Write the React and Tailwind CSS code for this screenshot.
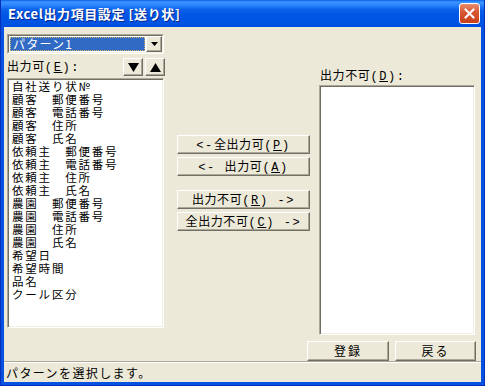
import React from "react";

const jp = { fontFamily: '"Noto Sans CJK JP", "Noto Sans", sans-serif' };

function Half({ children }) {
  return (
    <span className="font-['Liberation_Mono',monospace] tracking-[1.6px]">{children}</span>
  );
}

function Acc({ label, k, before, after }) {
  return (
    <span className="tracking-[0.6px]">
      {before && <Half>{before}</Half>}
      {label}
      <Half>
        (<u>{k}</u>){after}
      </Half>
    </span>
  );
}

function ClassicButton({ className = "", children }) {
  return (
    <div
      className={
        "flex items-center justify-center bg-[#ece9d8] border border-t-white border-l-white border-r-[#716f64] border-b-[#716f64] shadow-[inset_-1px_-1px_#aca899] text-[12px] leading-none text-black " +
        className
      }
    >
      {children}
    </div>
  );
}

function Sunken({ className = "", children }) {
  return (
    <div
      className={
        "bg-white border border-t-[#aca899] border-l-[#aca899] border-r-white border-b-white shadow-[inset_1px_1px_#716f64,inset_-1px_-1px_#f1efe2] " +
        className
      }
    >
      {children}
    </div>
  );
}

const items = [
  "自社送り状№",
  "顧客　郵便番号",
  "顧客　電話番号",
  "顧客　住所",
  "顧客　氏名",
  "依頼主　郵便番号",
  "依頼主　電話番号",
  "依頼主　住所",
  "依頼主　氏名",
  "農園　郵便番号",
  "農園　電話番号",
  "農園　住所",
  "農園　氏名",
  "希望日",
  "希望時間",
  "品名",
  "クール区分",
];

export default function App() {
  return (
    <div
      style={jp}
      className="w-[485px] h-[386px] flex flex-col bg-[#0552e2] border-x border-b border-[#0a2fb8] text-black select-none"
    >
      {/* title bar */}
      <div className="h-[29px] flex items-center pl-[7px] pr-[4px] bg-[linear-gradient(to_bottom,#0a5fe8_0px,#3d95ff_2px,#2a86fb_5px,#0a5ee9_10px,#0055e5_16px,#0053e2_24px,#0049d8_29px)]">
        <span className="flex-1 text-white font-bold text-[13px] tracking-[0.6px] [text-shadow:1px_1px_0_#0a2a8a] pt-[1px]">
          Excel出力項目設定 [送り状]
        </span>
        <div className="w-[21px] h-[21px] rounded-[3px] border border-white bg-[linear-gradient(to_bottom,#e98e6f,#d8532f_45%,#c7401b)] flex items-center justify-center">
          <svg width="11" height="11" viewBox="0 0 11 11">
            <path d="M1.5 1.5 L9.5 9.5 M9.5 1.5 L1.5 9.5" stroke="white" strokeWidth="2" strokeLinecap="square" />
          </svg>
        </div>
      </div>

      {/* client */}
      <div className="flex-1 mx-[3px] mb-[3px] bg-[#ece9d8] flex flex-col">
        <div className="flex items-start pl-[3px] pt-[7px]">
          {/* left column */}
          <div className="w-[157px] flex flex-col">
            <div className="h-[20px] flex border border-t-[#aca899] border-l-[#aca899] border-r-white border-b-white">
              <div className="flex-1 flex border border-t-[#716f64] border-l-[#716f64] border-r-[#f1efe2] border-b-[#f1efe2] bg-white">
                <div className="flex-1 m-[1px] bg-[#316ac5] outline-1 outline-dotted outline-[#c9b86a] -outline-offset-1 text-white text-[12px] leading-[14px] pl-[3px] tracking-[1.2px]">
                  パターン1
                </div>
                <ClassicButton className="w-[16px]">
                  <svg width="7" height="4" viewBox="0 0 7 4">
                    <path d="M0 0 H7 L3.5 4 Z" fill="black" />
                  </svg>
                </ClassicButton>
              </div>
            </div>

            <div className="mt-[4px] h-[18px] flex items-center">
              <div className="flex-1 text-[12px] leading-[14px]">
                <Acc label="出力可" k="E" after=":" />
              </div>
              <ClassicButton className="w-[20px] h-[18px]">
                <svg width="11" height="9" viewBox="0 0 11 9">
                  <path d="M0 0 H11 L5.5 9 Z" fill="black" />
                </svg>
              </ClassicButton>
              <ClassicButton className="w-[20px] h-[18px] ml-[2px] mr-[-1px]">
                <svg width="11" height="9" viewBox="0 0 11 9">
                  <path d="M0 9 H11 L5.5 0 Z" fill="black" />
                </svg>
              </ClassicButton>
            </div>

            <Sunken className="mt-[2px] h-[250px] pl-[4px] pt-[1px]">
              {items.map((t) => (
                <div key={t} className="h-[13px] text-[11.5px] leading-[13px] tracking-[1.8px] whitespace-pre">
                  {t}
                </div>
              ))}
            </Sunken>
          </div>

          {/* middle buttons */}
          <div className="ml-[13px] mt-[101px] w-[133px] flex flex-col gap-[3px]">
            <ClassicButton className="h-[19px]">
              <Acc before="<-" label="全出力可" k="P" />
            </ClassicButton>
            <ClassicButton className="h-[19px]">
              <Acc before="<- " label="出力可" k="A" />
            </ClassicButton>
            <ClassicButton className="h-[19px] mt-[11px]">
              <Acc label="出力不可" k="R" after=" ->" />
            </ClassicButton>
            <ClassicButton className="h-[19px]">
              <Acc label="全出力不可" k="C" after=" ->" />
            </ClassicButton>
          </div>

          {/* right column */}
          <div className="ml-[9px] mt-[34px] w-[156px] flex flex-col">
            <div className="h-[17px] pl-[1px] text-[12px] leading-[14px]">
              <Acc label="出力不可" k="D" after=":" />
            </div>
            <Sunken className="h-[250px]" />
          </div>
        </div>

        {/* bottom buttons */}
        <div className="mt-[6px] flex justify-end pr-[5px] gap-[6px]">
          <ClassicButton className="w-[82px] h-[20px] tracking-[2px]">登録</ClassicButton>
          <ClassicButton className="w-[81px] h-[20px] tracking-[2px]">戻る</ClassicButton>
        </div>

        {/* status bar */}
        <div className="mt-auto h-[21px] border-t border-[#aca899] flex items-center">
          <div className="flex-1 h-full border-t border-white pl-[2px] flex items-center text-[12px] tracking-[1.4px]">
            パターンを選択します。
          </div>
        </div>
      </div>
    </div>
  );
}
